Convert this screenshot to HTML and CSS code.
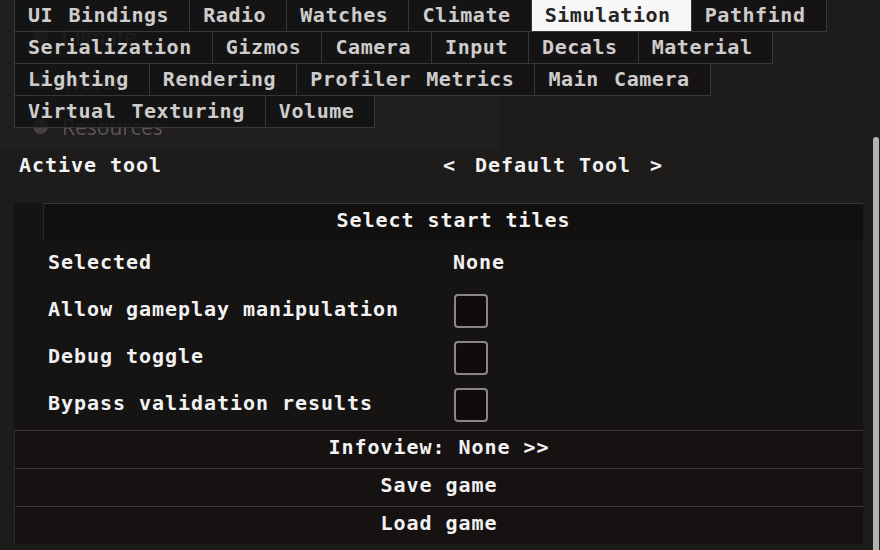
FILE: index.html
```html
<!DOCTYPE html>
<html>
<head>
<meta charset="utf-8">
<link rel="stylesheet" href="styles.css">
</head>
<body>
<div class="ghost">
  <div class="ghost-item"><span class="dot"></span>Climate</div>
  <div class="ghost-item"><span class="dot"></span>Water</div>
  <div class="ghost-item"><span class="dot"></span>Resources</div>
</div>
<div class="page">
  <div class="tabs">
    <div class="tab-row">
      <div class="tab">UI Bindings</div><div class="tab">Radio</div><div class="tab">Watches</div><div class="tab">Climate</div><div class="tab active">Simulation</div><div class="tab">Pathfind</div>
    </div>
    <div class="tab-row">
      <div class="tab">Serialization</div><div class="tab">Gizmos</div><div class="tab">Camera</div><div class="tab">Input</div><div class="tab">Decals</div><div class="tab">Material</div>
    </div>
    <div class="tab-row">
      <div class="tab">Lighting</div><div class="tab">Rendering</div><div class="tab">Profiler Metrics</div><div class="tab">Main Camera</div>
    </div>
    <div class="tab-row">
      <div class="tab">Virtual Texturing</div><div class="tab">Volume</div>
    </div>
  </div>

  <div class="tool-row">
    <div class="tool-label">Active tool</div>
    <div class="tool-value"><span>&lt;</span><span>Default Tool</span><span>&gt;</span></div>
  </div>

  <div class="panel">
    <div class="panel-head">Select start tiles</div>
    <div class="field"><div class="f-label">Selected</div><div class="f-value">None</div></div>
    <div class="field"><div class="f-label">Allow gameplay manipulation</div><div class="f-value"><span class="check"></span></div></div>
    <div class="field"><div class="f-label">Debug toggle</div><div class="f-value"><span class="check"></span></div></div>
    <div class="field"><div class="f-label">Bypass validation results</div><div class="f-value"><span class="check"></span></div></div>
    <div class="buttons">
      <div class="btn">Infoview: None &gt;&gt;</div>
      <div class="btn">Save game</div>
      <div class="btn">Load game</div>
    </div>
  </div>
</div>
<div class="scrollbar"></div>
</body>
</html>
```
FILE: styles.css
```css
html, body {
  margin: 0;
  padding: 0;
}
body {
  width: 880px;
  height: 550px;
  overflow: hidden;
  position: relative;
  background: #1e1b1b;
  font-family: "DejaVu Sans Mono", "Liberation Mono", monospace;
  font-weight: bold;
  font-size: 20px;
  letter-spacing: 0.96px;
  color: #f2f2f2;
}
.ghost {
  position: absolute;
  left: 0;
  top: 0;
  width: 500px;
  height: 150px;
  background: #201e1e;
  padding-top: 14px;
  box-sizing: border-box;
  font-family: "Open Sans", "Liberation Sans", sans-serif;
  font-weight: normal;
  letter-spacing: 0;
  font-size: 21px;
  color: #5a5656;
}
.ghost-item {
  display: flex;
  align-items: center;
  gap: 14px;
  padding-left: 33px;
  height: 45px;
}
.dot {
  width: 15px;
  height: 15px;
  border-radius: 50%;
  background: #464242;
}
.page {
  position: relative;
  width: 863px;
}
.tabs {
  padding-left: 14px;
  margin-top: -1px;
}
.tab-row {
  display: flex;
  margin-bottom: -1px;
}
.tab {
  height: 31px;
  line-height: 31px;
  padding: 0 20px 0 13px;
  border: 1px solid #3a3737;
  margin-right: -1px;
  background: rgba(20, 18, 18, 0.82);
  color: #cfcccc;
  white-space: pre;
  letter-spacing: 0.56px;
  word-spacing: 2.6px;
}
.tab.active {
  background: #f7f7f7;
  color: #262424;
}
.tool-row {
  display: grid;
  grid-template-columns: 424px auto;
  padding-left: 19px;
  margin-top: 20px;
  height: 38px;
  line-height: 37px;
}
.tool-value {
  display: flex;
  gap: 19px;
}
.panel {
  margin: 18px 0 0 14px;
  background: #161313;
}
.panel-head {
  margin-left: 29px;
  height: 32px;
  line-height: 32px;
  padding-bottom: 4px;
  text-align: center;
  background: #120f0f;
  border-top: 1px solid #3a3636;
  border-left: 1px solid #2c2828;
}
.field {
  display: grid;
  grid-template-columns: 405px auto;
  align-items: center;
  padding-left: 34px;
  height: 44px;
  padding-bottom: 3px;
}
.f-value {
  display: flex;
  align-items: center;
}
.check {
  width: 30px;
  height: 30px;
  margin: 3px 0 0 1px;
  border: 2px solid #8a8686;
  border-radius: 4px;
  background: #110c0c;
}
.buttons {
  margin-top: 2px;
}
.btn {
  height: 33px;
  line-height: 33px;
  padding-bottom: 4px;
  text-align: center;
  border-top: 1px solid #3a3636;
  border-left: 1px solid #2e2a2a;
  background: #161212;
}
.scrollbar {
  position: absolute;
  left: 873px;
  top: 137px;
  width: 6px;
  height: 420px;
  border-radius: 3px 3px 0 0;
  background: #b3b1b1;
}
```
